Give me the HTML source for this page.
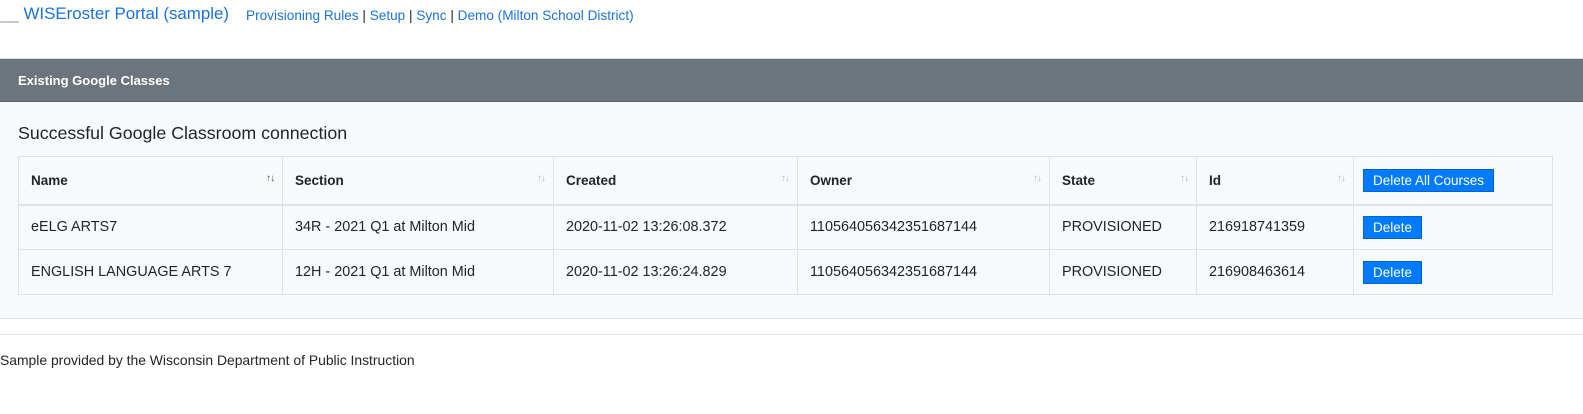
<!DOCTYPE html>
<html><head><meta charset="utf-8"><style>
*{margin:0;padding:0;box-sizing:border-box}
body{width:1583px;height:414px;background:#fff;font-family:"Liberation Sans",sans-serif;color:#212529;position:relative;overflow:hidden}
.a{position:absolute;white-space:nowrap}
a{text-decoration:none;color:#1a73d9}
.card{position:absolute;left:0;top:58px;width:1583px;height:261px;background:#f8f9fa;border-top:1px solid #d6d9dc;border-bottom:1px solid #dfe2e5}
.hd{position:absolute;left:0;top:0;width:100%;height:43px;background:#6c757d;border-bottom:1px solid #5c646b}
table{position:absolute;left:18px;top:156px;width:1534px;table-layout:fixed;border-collapse:collapse;font-size:14.4px}
td,th{border:1px solid #dee2e6;padding:0 12px;text-align:left;vertical-align:middle;position:relative;white-space:nowrap}
th{height:48px;border-bottom:2px solid #dee2e6;font-weight:bold;font-size:13.5px}
td{height:45px}
.s{position:absolute;right:8px;top:16px;font-size:10px;color:#b5b9bd;font-weight:normal;letter-spacing:-1px}
.btn{display:inline-block;background:#007bff;color:#fff;border:1px solid #0062cc;font-size:13.5px;padding:0 9px;height:23px;line-height:21px;font-weight:normal}
</style></head><body>
<div class="a" style="left:0;top:4px;font-size:16.9px;color:#1a73d9"><span style="color:#999">__</span> WISEroster Portal (sample)</div>
<div class="a" style="left:246px;top:8px;font-size:13.6px;color:#212529"><a>Provisioning Rules</a> | <a>Setup</a> | <a>Sync</a> | <a>Demo (Milton School District)</a></div>
<div class="card"><div class="hd"><div class="a" style="left:18px;top:14px;font-size:13px;font-weight:bold;color:#fff">Existing Google Classes</div></div>
<div class="a" style="left:18px;top:64px;font-size:17.8px">Successful Google Classroom connection</div></div>
<table>
<colgroup><col style="width:264px"><col style="width:271px"><col style="width:244px"><col style="width:252px"><col style="width:147px"><col style="width:157px"><col style="width:199px"></colgroup>
<tr><th>Name<span class="s" style="color:#555">↑↓</span></th><th>Section<span class="s">↑↓</span></th><th>Created<span class="s">↑↓</span></th><th>Owner<span class="s">↑↓</span></th><th>State<span class="s">↑↓</span></th><th>Id<span class="s">↑↓</span></th><th style="padding-left:9px"><span class="btn">Delete All Courses</span></th></tr>
<tr><td>eELG ARTS7</td><td>34R - 2021 Q1 at Milton Mid</td><td>2020-11-02 13:26:08.372</td><td>110564056342351687144</td><td>PROVISIONED</td><td>216918741359</td><td style="padding-left:9px"><span class="btn">Delete</span></td></tr>
<tr><td>ENGLISH LANGUAGE ARTS 7</td><td>12H - 2021 Q1 at Milton Mid</td><td>2020-11-02 13:26:24.829</td><td>110564056342351687144</td><td>PROVISIONED</td><td>216908463614</td><td style="padding-left:9px"><span class="btn">Delete</span></td></tr>
</table>
<div class="a" style="left:0;top:334px;width:1583px;border-top:1px solid #dee2e6"></div>
<div class="a" style="left:0;top:352px;font-size:13.9px">Sample provided by the Wisconsin Department of Public Instruction</div>
</body></html>
